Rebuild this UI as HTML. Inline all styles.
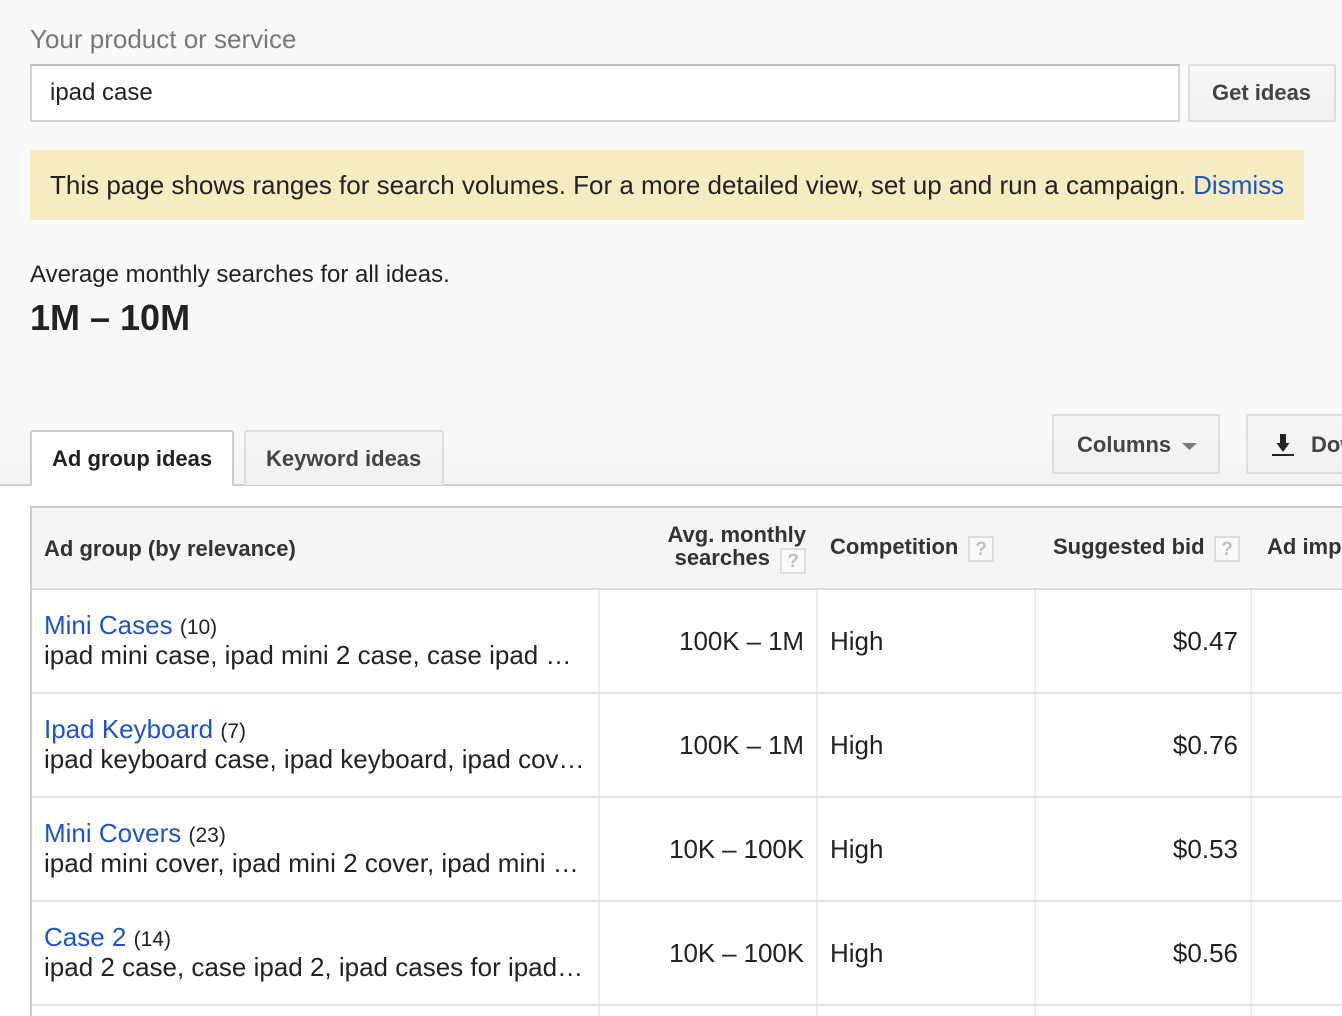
<!DOCTYPE html>
<html><head><meta charset="utf-8"><style>
html,body{margin:0;padding:0;width:1342px;height:1016px;overflow:hidden;background:#fff}
body{position:relative;font-family:"Liberation Sans",sans-serif;color:#222}
.t{position:absolute;white-space:nowrap;line-height:30px}
.box{position:absolute;box-sizing:border-box}
.s26{font-size:26px}.s24{font-size:24px}.s22{font-size:22px}
.c{font-size:21px}
.h{font-size:22px;font-weight:bold;color:#333}
.r{text-align:right}
.n{letter-spacing:-.1px}
a{color:#1c55c5;text-decoration:none}
.q{position:absolute;box-sizing:border-box;width:26px;height:26px;border:2px solid #ddd;background:#f9f9f9;color:#c0c0c0;font:bold 19px/23px "Liberation Sans",sans-serif;text-align:center}
.btn{position:absolute;box-sizing:border-box;border:2px solid #ddd;background:linear-gradient(#f6f6f6,#f1f1f1);border-radius:2px}
</style></head><body>
<div class="box" style="left:0;top:0;width:1342px;height:485px;background:linear-gradient(#f9f9f9 0,#f9f9f9 410px,#f4f4f4 484px)"></div>
<div class="box" style="left:0;top:484px;width:1342px;height:2px;background:#ccc"></div>

<div class="t s26" style="left:30px;top:24px;color:#777">Your product or service</div>
<div class="box" style="left:30px;top:64px;width:1150px;height:58px;background:#fff;border:2px solid #d3d3d3;border-top-color:#bbb"></div>
<div class="t s24" style="left:50px;top:78px">ipad case</div>
<div class="btn" style="left:1188px;top:64px;width:148px;height:58px"></div>
<div class="t s22" style="left:1212px;top:78px;font-weight:bold;color:#444">Get ideas</div>

<div class="box" style="left:30px;top:150px;width:1274px;height:70px;background:#f6ecc2"></div>
<div class="t s26" style="left:50px;top:170px">This page shows ranges for search volumes. For a more detailed view, set up and run a campaign. <a>Dismiss</a></div>

<div class="t s24" style="left:30px;top:260px">Average monthly searches for all ideas.</div>
<div class="t" style="left:30px;top:303px;font-size:36px;font-weight:bold">1M – 10M</div>

<div class="box" style="left:30px;top:430px;width:204px;height:56px;background:#fff;border:2px solid #ccc;border-bottom:0;border-radius:3px 3px 0 0"></div>
<div class="t s22" style="left:52px;top:444px;font-weight:bold;color:#222">Ad group ideas</div>
<div class="box" style="left:244px;top:430px;width:200px;height:55px;background:linear-gradient(#f6f6f6,#f1f1f1);border:2px solid #ddd;border-bottom:0;border-radius:3px 3px 0 0"></div>
<div class="t s22" style="left:266px;top:444px;font-weight:bold;color:#444">Keyword ideas</div>

<div class="btn" style="left:1052px;top:414px;width:168px;height:60px"></div>
<div class="t s22" style="left:1077px;top:430px;font-weight:bold;color:#444">Columns</div>
<svg style="position:absolute;left:1182px;top:443px" width="15" height="7"><path d="M0 0H15L7.5 7Z" fill="#777"/></svg>
<div class="btn" style="left:1246px;top:414px;width:96px;height:60px;border-right:0;border-radius:2px 0 0 2px"></div>
<svg style="position:absolute;left:1272px;top:433px" width="22" height="24"><path d="M8 1H14V10H17.5L11 19L4.500 10H8Z" fill="#222"/><rect x="0" y="21" width="22" height="2" fill="#222"/></svg>
<div class="t s22" style="left:1311px;width:31px;overflow:hidden;top:430px;font-weight:bold;color:#444">Download</div>

<div class="box" style="left:30px;top:506px;width:1312px;height:84px;background:#f5f5f5;border-top:2px solid #ccc;border-left:2px solid #ccc;border-bottom:2px solid #ddd"></div>
<div class="box" style="left:30px;top:590px;width:2px;height:426px;background:#ccc"></div>
<div class="t h" style="left:44px;top:534px">Ad group (by relevance)</div>
<div class="t h r" style="left:600px;width:206px;top:520px">Avg. monthly</div>
<div class="t h r" style="left:600px;width:170px;top:543px">searches</div>
<div class="q" style="left:780px;top:548px">?</div>
<div class="t h" style="left:830px;top:532px">Competition</div>
<div class="q" style="left:968px;top:536px">?</div>
<div class="t h" style="left:1053px;top:532px">Suggested bid</div>
<div class="q" style="left:1214px;top:536px">?</div>
<div class="t h" style="left:1267px;width:75px;overflow:hidden;top:532px">Ad impr. share</div>

<div class="box" style="left:598px;top:590px;width:2px;height:426px;background:#eee"></div>
<div class="box" style="left:816px;top:590px;width:2px;height:426px;background:#eee"></div>
<div class="box" style="left:1034px;top:590px;width:2px;height:426px;background:#eee"></div>
<div class="box" style="left:1250px;top:590px;width:2px;height:426px;background:#eee"></div>
<div class="box" style="left:32px;top:692px;width:1310px;height:2px;background:#e6e6e6"></div>
<div class="box" style="left:32px;top:796px;width:1310px;height:2px;background:#e6e6e6"></div>
<div class="box" style="left:32px;top:900px;width:1310px;height:2px;background:#e6e6e6"></div>
<div class="box" style="left:32px;top:1004px;width:1310px;height:2px;background:#e6e6e6"></div>

<div class="t s26" style="left:44px;top:610px"><a>Mini Cases</a> <span class="c">(10)</span></div>
<div class="t s26" style="left:44px;top:640px">ipad mini case, ipad mini 2 case, case ipad …</div>
<div class="t s26 r n" style="left:600px;width:204px;top:626px">100K – 1M</div>
<div class="t s26" style="left:830px;top:626px">High</div>
<div class="t s26 r" style="left:1040px;width:198px;top:626px">$0.47</div>

<div class="t s26" style="left:44px;top:714px"><a>Ipad Keyboard</a> <span class="c">(7)</span></div>
<div class="t s26" style="left:44px;top:744px">ipad keyboard case, ipad keyboard, ipad cov…</div>
<div class="t s26 r n" style="left:600px;width:204px;top:730px">100K – 1M</div>
<div class="t s26" style="left:830px;top:730px">High</div>
<div class="t s26 r" style="left:1040px;width:198px;top:730px">$0.76</div>

<div class="t s26" style="left:44px;top:818px"><a>Mini Covers</a> <span class="c">(23)</span></div>
<div class="t s26" style="left:44px;top:848px">ipad mini cover, ipad mini 2 cover, ipad mini …</div>
<div class="t s26 r n" style="left:600px;width:204px;top:834px">10K – 100K</div>
<div class="t s26" style="left:830px;top:834px">High</div>
<div class="t s26 r" style="left:1040px;width:198px;top:834px">$0.53</div>

<div class="t s26" style="left:44px;top:922px"><a>Case 2</a> <span class="c">(14)</span></div>
<div class="t s26" style="left:44px;top:952px">ipad 2 case, case ipad 2, ipad cases for ipad…</div>
<div class="t s26 r n" style="left:600px;width:204px;top:938px">10K – 100K</div>
<div class="t s26" style="left:830px;top:938px">High</div>
<div class="t s26 r" style="left:1040px;width:198px;top:938px">$0.56</div>
</body></html>
